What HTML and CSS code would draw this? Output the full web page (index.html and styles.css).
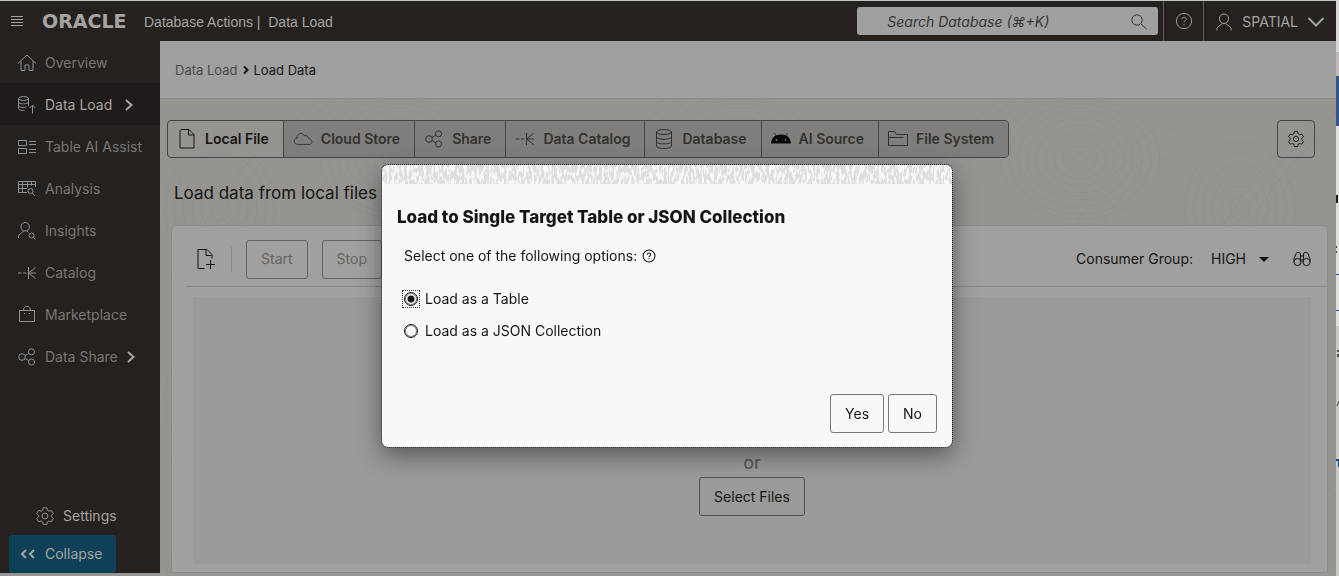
FILE: index.html
```html
<!DOCTYPE html>
<html lang="en">
<head>
<meta charset="utf-8">
<title>Database Actions | Data Load</title>
<link rel="stylesheet" href="styles.css">
</head>
<body>
<svg class="defs" width="0" height="0" aria-hidden="true">
  <symbol id="i-catalog" viewBox="0 0 20 20"><path d="M1 10h3.500M6 10h3.500M11.500 4v12M19 10h-7.500M18.500 4.500L11.500 10l7 5.500"/></symbol>
  <symbol id="i-share" viewBox="0 0 20 20"><circle cx="5" cy="10" r="3.300"/><circle cx="14.500" cy="4.800" r="3"/><circle cx="14.500" cy="15" r="3"/><path d="M8 8.500l3.800-2.200M8 11.500l3.800 2"/></symbol>
  <symbol id="i-gear" viewBox="0 0 20 20"><path d="M8.200 1.800h3.600l.6 2.500 1.600.9 2.500-.7 1.800 3.100-1.900 1.700v1.600l1.900 1.700-1.800 3.100-2.500-.7-1.600.9-.6 2.500H8.200l-.6-2.500-1.600-.9-2.500.7-1.800-3.100 1.900-1.700V9.300L1.700 7.600l1.800-3.100 2.500.7 1.600-.9z"/><circle cx="10" cy="10" r="2.900"/></symbol>
  <symbol id="i-right" viewBox="0 0 10 14"><path d="M2 2l5.500 5L2 12"/></symbol>
  <symbol id="i-help" viewBox="0 0 20 20"><circle cx="10" cy="10" r="8.500"/><path d="M7.700 8.100c0-3 4.700-3 4.700 0 0 1.700-2.400 1.700-2.400 3.600M10 13.200v1.600"/></symbol>
</svg>
<div class="window">
  <div class="app">
    <header class="topbar">
      <button class="icon-btn menu" aria-label="Menu"><svg width="12" height="12" viewBox="0 0 12 12"><path d="M0 1.500h12M0 4.500h12M0 7.500h12M0 10.500h12"/></svg></button>
      <span class="logo">ORACLE</span>
      <span class="product">Database Actions |&nbsp; Data Load</span>
      <div class="search">
        <input type="text" aria-label="Search Database" placeholder="Search Database (⌘+K)">
        <svg width="18" height="18" viewBox="0 0 18 18"><circle cx="7" cy="7" r="5.200"/><path d="M11 11l5.500 5"/></svg>
      </div>
      <button class="icon-btn help" aria-label="Help"><svg width="18" height="18"><use href="#i-help"/></svg></button>
      <button class="user">
        <svg width="18" height="20" viewBox="0 0 18 20"><path d="M9 11.500c-3 0-4.500-2.500-4.500-5S6.200 2 9 2s4.500 2 4.500 4.500-1.500 5-4.500 5zM2 18.500v-2c0-2 3.500-2.500 5-5M16 18.500v-2c0-2-3.500-2.500-5-5"/></svg>
        <span>SPATIAL</span>
        <svg class="thick" width="18" height="12" viewBox="0 0 18 12"><path d="M1.500 2L9 9.500 16.500 2"/></svg>
      </button>
    </header>
    <div class="body">
      <nav class="sidebar">
        <a href="#"><svg width="20" height="20" viewBox="0 0 20 20"><path d="M1 10.500L10 2l9 8.500M4 8v9.500h4V12h4v5.500h4V8"/></svg>Overview</a>
        <a href="#" class="active"><svg width="20" height="20" viewBox="0 0 20 20"><ellipse cx="6.500" cy="3.500" rx="5" ry="2"/><path d="M1.500 3.500v10c0 1.300 2.500 2 6 2M11.500 3.500V11M1.500 7c0 2.500 10 2.500 10 0M1.500 10.500c0 2 6 2.500 8 1.300M15.500 18.500v-8M12.500 13.200l3-3 3 3"/></svg>Data Load<svg class="arrow" width="10" height="14"><use href="#i-right"/></svg></a>
        <a href="#"><svg width="20" height="20" viewBox="0 0 20 20"><path d="M1.500 3.500h8v5h-8zM1.500 11.500h8v5h-8zM12 4.500h7M12 7.500h7M12 12.500h7M12 15.500h7"/></svg>Table AI Assist</a>
        <a href="#"><svg width="20" height="20" viewBox="0 0 20 20"><path d="M10 13.500H1.500v-11h17V8M1.500 5.500h17M1.500 9.500H10M5.500 2.500v11M10.500 2.500v6M14.500 2.500v4"/><circle cx="13.500" cy="12" r="2.500"/><path d="M15.300 14l2.700 3"/></svg>Analysis</a>
        <a href="#"><svg width="20" height="20" viewBox="0 0 20 20"><path d="M8 10c-2.500 0-4-1.800-4-4.200S5.500 1.500 8 1.500s4.500 1.900 4.500 4.300S10.500 10 8 10zM1.500 17v-1.500c0-2.500 3-2.500 5-5.500M10 10l1.500 1.500"/><circle cx="14.500" cy="14.500" r="2.500"/><path d="M16.300 16.300l2.200 2.200"/></svg>Insights</a>
        <a href="#"><svg width="20" height="20"><use href="#i-catalog"/></svg>Catalog</a>
        <a href="#"><svg width="20" height="20" viewBox="0 0 20 20"><path d="M2.500 5.500h15v11h-15zM6.500 5.500C6.500 0 13.500 0 13.500 5.500M7 8.500h1M12 8.500h1"/></svg>Marketplace</a>
        <a href="#"><svg width="20" height="20"><use href="#i-share"/></svg>Data Share<svg class="arrow" width="10" height="14"><use href="#i-right"/></svg></a>
        <div class="bottom">
          <a href="#" class="settings"><svg width="20" height="20"><use href="#i-gear"/></svg>Settings</a>
          <button class="collapse"><svg width="16" height="12" viewBox="0 0 16 12"><path d="M6 2L2 6l4 4M14 2l-4 4 4 4"/></svg>Collapse</button>
        </div>
      </nav>
      <main class="main">
        <div class="crumbs"><a href="#">Data Load</a><svg width="6" height="10" viewBox="0 0 6 10"><path d="M1 1.500L4.500 5 1 8.500"/></svg><span>Load Data</span></div>
        <div class="content">
          <svg class="waves" aria-hidden="true">
            <defs>
              <pattern id="rings" width="340" height="190" patternUnits="userSpaceOnUse">
                <g fill="none" stroke="#908f8c" stroke-width="1">
                  <path d="M-10 200C60 120 60 60 180-10M0 208C68 126 68 66 190-8M10 214C76 132 76 72 200-6M20 220C84 138 84 78 210-4M190 200C230 110 250 60 350 10M200 206C238 116 258 66 360 16M210 212C246 122 266 72 370 22M220 218C254 128 274 78 380 28"/>
                  <ellipse cx="240" cy="60" rx="8" ry="6"/><ellipse cx="240" cy="60" rx="17" ry="13"/><ellipse cx="240" cy="60" rx="26" ry="20"/><ellipse cx="240" cy="60" rx="35" ry="27"/><ellipse cx="240" cy="60" rx="44" ry="34"/><ellipse cx="240" cy="60" rx="53" ry="41"/><ellipse cx="240" cy="60" rx="62" ry="48"/><ellipse cx="240" cy="60" rx="71" ry="55"/><ellipse cx="240" cy="60" rx="80" ry="60"/>
                  <ellipse cx="60" cy="110" rx="10" ry="12"/><ellipse cx="60" cy="110" rx="19" ry="23"/><ellipse cx="60" cy="110" rx="28" ry="34"/><ellipse cx="60" cy="110" rx="37" ry="45"/><ellipse cx="60" cy="110" rx="46" ry="56"/><ellipse cx="60" cy="110" rx="55" ry="67"/>
                </g>
              </pattern>
            </defs>
            <rect width="100%" height="100%" fill="url(#rings)"/>
          </svg>
          <div class="tabrow">
            <div class="tabs" role="tablist">
              <button role="tab" aria-selected="true" class="tab on"><svg width="20" height="22" viewBox="0 0 20 22"><path d="M4 1.500h8l5 5V20H3V2.500zM11.500 1.500V7H17"/></svg>Local File</button>
              <button role="tab" class="tab"><svg width="20" height="22" viewBox="0 0 22 22"><path d="M5.500 17C0 17 .5 10.500 4.500 10 4 5 10.500 2.500 12.500 7.500c2.500-1 4.500.5 4.500 3C22 11 22 17 17.500 17z"/></svg>Cloud Store</button>
              <button role="tab" class="tab"><svg width="20" height="20"><use href="#i-share"/></svg>Share</button>
              <button role="tab" class="tab"><svg width="20" height="20"><use href="#i-catalog"/></svg>Data Catalog</button>
              <button role="tab" class="tab"><svg width="20" height="22" viewBox="0 0 20 22"><ellipse cx="10" cy="4" rx="7.500" ry="2.500"/><path d="M2.500 4v14c0 3.300 15 3.300 15 0V4M2.500 8.800c0 3.300 15 3.300 15 0M2.500 13.500c0 3.300 15 3.300 15 0"/></svg>Database</button>
              <button role="tab" class="tab"><svg width="20" height="20" viewBox="0 0 20 20"><path class="solid" d="M0 14.500C.5 8.500 4 5.500 10 5.500s9.500 3 10 9z"/><path d="M5 7L3.500 4M15 7l1.500-3"/><circle class="eye" cx="5.500" cy="11" r=".8"/><circle class="eye" cx="14.500" cy="11" r=".8"/></svg>AI Source</button>
              <button role="tab" class="tab"><svg width="20" height="20" viewBox="0 0 20 20"><path d="M.5 16.500v-14h6l2 3h11v11zM.5 8.500h15"/></svg>File System</button>
            </div>
            <button class="gear" aria-label="Preferences"><svg width="18" height="18"><use href="#i-gear"/></svg></button>
          </div>
          <h1>Load data from local files</h1>
          <section class="card">
            <div class="toolbar">
              <button class="icon-btn add" aria-label="Add file"><svg width="20" height="22" viewBox="0 0 20 22"><path d="M8.500 20.500H2v-19h9l5 5v4M10 2v5.500h5.500M10 16.500h9M14.500 12v9"/></svg></button>
              <span class="rule"></span>
              <button class="btn" disabled>Start</button>
              <button class="btn" disabled>Stop</button>
              <label class="group" for="group">Consumer Group:</label>
              <span class="pick"><select id="group"><option>HIGH</option></select></span>
              <button class="icon-btn" aria-label="Find"><svg width="18" height="16" viewBox="0 0 18 16"><circle cx="4.500" cy="11" r="3.600"/><circle cx="13.500" cy="11" r="3.600"/><path d="M1 11V8L3 2.500C3.500 1 7.500 1 7.500 3v8M17 11V8l-2-5.500C14.500 1 10.500 1 10.500 3v8M7.500 5h3M7.500 9h3"/></svg></button>
            </div>
            <div class="drop"><span class="or">or</span><button class="btn files">Select Files</button></div>
          </section>
        </div>
      </main>
    </div>
  </div>
  <svg class="edge" width="3" height="576" viewBox="0 0 3 576" aria-hidden="true"><rect width="3" height="52" fill="#d8d8d8"/><rect y="52" width="3" height="24" fill="#bebbb7"/><rect y="76" width="3" height="50" fill="#34558a"/><rect y="195" width="2" height="8" fill="#1c1c1c"/><rect y="246" width="1" height="2" fill="#444"/><rect y="251" width="1" height="2" fill="#444"/><rect y="274" width="3" height="1" fill="#0b57a8"/><rect y="310" width="3" height="1" fill="#0b57a8"/><rect y="326" width="3" height="250" fill="#c9c8c4"/><path d="M1 350h2v2H1zM1 354h2v3H1z" fill="#555"/><path d="M1 406l2-5" stroke="#444" fill="none"/><path d="M0 459h3v8H2v-6H0z" fill="#0b4a8c"/></svg>
</div>
<div class="dialog" role="dialog" aria-modal="true" aria-labelledby="dlg-title">
  <svg class="band" aria-hidden="true"><filter id="grain" x="0" y="0" width="100%" height="100%" color-interpolation-filters="sRGB"><feTurbulence type="fractalNoise" baseFrequency="0.4 0.13" numOctaves="2" seed="4"/><feColorMatrix values="0 0 0 0 0.88  0 0 0 0 0.87  0 0 0 0 0.86  7 0 0 0 -2.8"/></filter><rect width="100%" height="100%" filter="url(#grain)"/></svg>
  <h2 id="dlg-title">Load to Single Target Table or JSON Collection</h2>
  <p>Select one of the following options: <svg width="14" height="14"><use href="#i-help"/></svg></p>
  <div class="options">
    <label><span class="focus"><input type="radio" name="target" checked></span>Load as a Table</label>
    <label><span><input type="radio" name="target"></span>Load as a JSON Collection</label>
  </div>
  <div class="actions"><button class="btn">Yes</button><button class="btn">No</button></div>
</div>
</body>
</html>
```

FILE: styles.css
```css
* { box-sizing: border-box; }
body {
  margin: 0;
  font: 14px/20px Inter, "Noto Sans", sans-serif;
  color: #161513;
}
.defs { position: absolute; }
svg { fill: none; stroke: currentColor; flex: none; display: block; }
button, input, select { font: inherit; color: inherit; }
button { cursor: pointer; background: none; border: 0; padding: 0; }
a { color: inherit; text-decoration: none; }
h1, h2, p { margin: 0; }

.window { display: flex; min-height: 100vh; background: #e0dfdd; overflow: hidden; }
.app {
  flex: 1;
  min-width: 0;
  display: flex;
  flex-direction: column;
  border-top: 1px solid #c4c6c4;
  border-bottom: 3px solid #969696;
}
.edge { stroke: none; }

.topbar { display: flex; align-items: stretch; height: 40px; background: #25211e; color: #a5a4a2; }
.topbar > span { align-self: center; }
.icon-btn { display: flex; align-items: center; justify-content: center; }
.menu { padding: 0 11px; }
.logo { width: 110px; padding-left: 8px; font: bold 19px/24px "DejaVu Sans", sans-serif; }
.product { font: 14px/20px "Liberation Sans", sans-serif; padding-top: 2px; }
.search { display: flex; align-items: center; width: 301px; margin: 6px 5px 6px auto; padding: 2px 10px 0 30px; border-radius: 3px; background: #a0a0a0; color: #3c3a38; }
.search input { flex: 1; min-width: 0; border: 0; background: none; padding: 0; outline: 0; font-style: italic; }
.search input::placeholder { color: #383634; opacity: 1; }
.help { width: 40px; border-left: 1px solid #5f5c5a; }
.user { display: flex; align-items: center; gap: 9px; padding: 2px 11px 0 11px; border-left: 1px solid #5f5c5a; }
.thick { stroke-width: 2; }

.body { flex: 1; display: flex; }
.sidebar { width: 160px; display: flex; flex-direction: column; background: #25211e; color: #797775; }
.sidebar a { display: flex; align-items: center; gap: 8px; height: 42px; padding: 2px 26px 0 17px; white-space: nowrap; }
.sidebar a > svg { color: #929190; }
.sidebar .active { background: #1f1b1a; color: #a5a4a2; }
.sidebar .arrow { stroke-width: 2; margin-left: auto; color: #a5a4a2; }
.sidebar .bottom { margin-top: auto; color: #a5a4a2; }
.sidebar .settings { height: 40px; padding-left: 35px; }
.collapse { display: flex; align-items: center; gap: 9px; height: 38px; margin-left: 9px; padding: 0 14px 0 11px; border-radius: 3px; background: #0e4057; }
.collapse svg { stroke-width: 2; }

.main { flex: 1; min-width: 0; display: flex; flex-direction: column; }
.crumbs { display: flex; align-items: center; gap: 5px; height: 58px; padding: 0 15px; font-size: 13px; background: #a0a0a0; border-bottom: 1px solid #8d8d8b; }
.crumbs a { color: #4c4b49; }
.crumbs svg { stroke-width: 2; }
.content { position: relative; flex: 1; display: flex; flex-direction: column; padding: 21px 8px 0 7px; background: #959491; }
.waves { position: absolute; inset: 0; width: 100%; height: 100%; stroke: none; }
.content > :not(.waves) { position: relative; }
.tabrow { display: flex; justify-content: space-between; padding-right: 13px; }
.tabs { display: flex; height: 38px; border: 1px solid #454442; border-radius: 4px; overflow: hidden; }
.tab { display: flex; align-items: center; gap: 8px; padding: 0 14px 0 9px; background: #7f7e7c; color: #333230; font-weight: 600; }
.tab + .tab { border-left: 1px solid #454442; }
.tab.on { background: none; color: #161513; }
.solid { fill: #080808; stroke: none; }
.eye { fill: #999; stroke: none; }
.gear { display: flex; align-items: center; justify-content: center; width: 38px; border: 1px solid #454442; border-radius: 4px; }
h1 { margin: 23px 7px 0; font-size: 17px; line-height: 24px; font-weight: 400; }
.card { flex: 1; display: flex; flex-direction: column; margin: 20px 0 0 4px; border: 1px solid #8b8b89; border-radius: 6px 6px 0 0; background: #a0a0a0; }
.toolbar { display: flex; align-items: center; margin-left: 14px; height: 61px; padding: 6px 16px 0 10px; border-bottom: 1px solid #878786; }
.rule { height: 25px; border-left: 1px solid #888; margin: 0 14px 0 15px; }
.btn { height: 39px; padding: 0 14px; border: 1px solid #535251; border-radius: 3px; }
.btn:disabled { color: #666563; border-color: #646361; margin-right: 14px; }
.group { margin-left: auto; padding-right: 18px; }
.pick { display: flex; align-items: center; margin-right: 24px; }
.pick::after { content: ""; border: 5px solid transparent; border-top-color: #161513; border-bottom: 0; margin-left: 12px; }
.pick select { appearance: none; border: 0; background: none; padding: 0; }
.drop { flex: 1; display: flex; flex-direction: column; align-items: center; justify-content: flex-end; margin: 10px 16px 8px 21px; padding-bottom: 48px; background: #9a9a9a; }
.or { font-size: 18px; line-height: 28px; color: #565553; }

.dialog {
  position: fixed;
  left: 382px;
  top: 165px;
  width: 570px;
  border-radius: 6px;
  outline: 1px dotted #333;
  background: #f9f8f6;
  box-shadow: 0 8px 24px rgba(0, 0, 0, .45);
  overflow: hidden;
}
.band { width: 100%; height: 19px; stroke: none; }
.dialog h2 { margin: 20px 15px 0; font-size: 17px; line-height: 26px; font-weight: 800; }
.dialog p { display: flex; align-items: center; gap: 5px; margin: 16px 22px 0; }
.dialog p svg { stroke-width: 1.5; }
.options { display: flex; flex-direction: column; gap: 12px; margin: 23px 21px 0; }
.options label { display: flex; align-items: center; gap: 6px; }
.options span { padding: 1px; }
.options input { display: block; appearance: none; width: 14px; height: 14px; margin: 0; border: 1px solid #161513; border-radius: 50%; box-shadow: inset 0 0 0 1px #8a8987; outline: 0; }
.options input:checked { background: radial-gradient(circle, #161513 0 3px, transparent 4px); }
.options .focus { outline: 1px dotted #333; }
.actions { display: flex; justify-content: flex-end; gap: 4px; margin: 53px 15px 14px; }
.actions .btn { border-color: #7a7978; }
```
